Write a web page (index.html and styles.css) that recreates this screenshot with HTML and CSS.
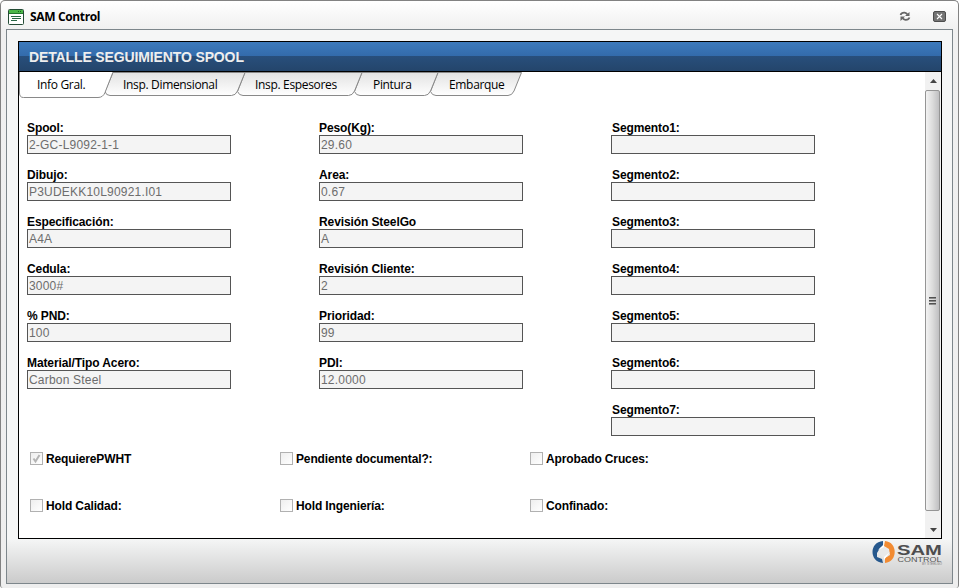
FILE: index.html
```html
<!DOCTYPE html>
<html lang="es">
<head>
<meta charset="utf-8">
<title>SAM Control</title>
<link rel="stylesheet" href="styles.css">
</head>
<body>
<div class="window">
  <header class="titlebar">
    <svg class="app-icon" width="16" height="16" viewBox="0 0 16 16">
      <rect x=".5" y=".5" width="15" height="15" rx="1" fill="#fff" stroke="#234b35"/>
      <path d="M1 1h14v3.500H1z" fill="#4bb648"/><path d="M1 4h14v1H1z" fill="#23752f"/>
      <path d="M10 2.500h1M12 2.500h1" stroke="#176020"/>
      <path d="M3 7.500h10M4 9.500h9M3 11.500h6" stroke="#286644"/>
    </svg>
    <span class="app-name">SAM Control</span>
    <svg class="reload" width="12" height="11" viewBox="0 0 12 11">
      <path d="M1.500 4q1-2.500 4-2.300 2 .3 3 1.800M10.500 6.500q-1 2.500-4 2.300-2-.3-3-1.800" fill="none" stroke="#666" stroke-width="1.700"/>
      <path d="M6 5h4.500V1zM6 5.500H1.500V10z" fill="#666"/>
    </svg>
    <svg class="close" width="13" height="11" viewBox="0 0 13 11">
      <rect x=".5" y=".5" width="12" height="10" rx="1.500" fill="#747474" stroke="#4d4d4d"/>
      <path d="M4 3l5 5M9 3L4 8" stroke="#fff" stroke-width="1.100"/>
    </svg>
  </header>
  <main class="frame">
    <section class="panel">
      <h1>DETALLE SEGUIMIENTO SPOOL</h1>
      <div class="content">
        <div class="page">
          <nav class="tabs">
            <svg class="tab-shapes" width="510" height="28" viewBox="19 72 510 28">
              <defs><linearGradient id="tab" x2="0" y2="1"><stop stop-color="#e2e2e2"/><stop offset="1" stop-color="#fff"/></linearGradient></defs>
              <g fill="url(#tab)" stroke="#898989">
                <path d="M438 72.500H521.500L514 91q-2 4.500-6 4.500H436q-4 0-5.500-4z"/>
                <path d="M362 72.500H438L430.500 91q-2 4.500-6 4.500H360q-4 0-5.500-4z"/>
                <path d="M245 72.500H362L354.500 91q-2 4.500-6 4.500H243q-4 0-5.500-4z"/>
                <path d="M113 72.500H245L237.500 91q-2 4.500-6 4.500H110q-4 0-5-4z"/>
                <path fill="#fff" d="M19.500 72V93q0 4.500 4 4.500H98q5 0 7-5L113 72"/>
              </g>
            </svg>
            <a class="tab t1"><span>Info Gral.</span></a><a class="tab t2"><span>Insp. Dimensional</span></a><a class="tab t3"><span>Insp. Espesores</span></a><a class="tab t4"><span>Pintura</span></a><a class="tab t5"><span>Embarque</span></a>
          </nav>
          <div class="fields">
            <div class="column">
              <div class="field"><label>Spool:</label><div class="value">2-GC-L9092-1-1</div></div>
              <div class="field"><label>Dibujo:</label><div class="value">P3UDEKK10L90921.I01</div></div>
              <div class="field"><label>Especificación:</label><div class="value">A4A</div></div>
              <div class="field"><label>Cedula:</label><div class="value">3000#</div></div>
              <div class="field"><label>% PND:</label><div class="value">100</div></div>
              <div class="field"><label>Material/Tipo Acero:</label><div class="value">Carbon Steel</div></div>
            </div>
            <div class="column">
              <div class="field"><label>Peso(Kg):</label><div class="value">29.60</div></div>
              <div class="field"><label>Area:</label><div class="value">0.67</div></div>
              <div class="field"><label>Revisión SteelGo</label><div class="value">A</div></div>
              <div class="field"><label>Revisión Cliente:</label><div class="value">2</div></div>
              <div class="field"><label>Prioridad:</label><div class="value">99</div></div>
              <div class="field"><label>PDI:</label><div class="value">12.0000</div></div>
            </div>
            <div class="column segments">
              <div class="field"><label>Segmento1:</label><div class="value"></div></div>
              <div class="field"><label>Segmento2:</label><div class="value"></div></div>
              <div class="field"><label>Segmento3:</label><div class="value"></div></div>
              <div class="field"><label>Segmento4:</label><div class="value"></div></div>
              <div class="field"><label>Segmento5:</label><div class="value"></div></div>
              <div class="field"><label>Segmento6:</label><div class="value"></div></div>
              <div class="field"><label>Segmento7:</label><div class="value"></div></div>
            </div>
          </div>
          <div class="checks">
            <div class="check"><i class="box"><svg width="11" height="11" viewBox="0 0 11 11"><path d="M2.500 5.500l2 3L8.500 2" fill="none" stroke="#b4b4b4" stroke-width="2"/></svg></i>RequierePWHT</div>
            <div class="check"><i class="box"></i>Pendiente documental?:</div>
            <div class="check"><i class="box"></i>Aprobado Cruces:</div>
            <div class="check"><i class="box"></i>Hold Calidad:</div>
            <div class="check"><i class="box"></i>Hold Ingeniería:</div>
            <div class="check"><i class="box"></i>Confinado:</div>
          </div>
        </div>
        <div class="scrollbar">
          <div class="arrow"><svg width="7" height="4"><path d="M0 4L3.500 0 7 4z" fill="#444"/></svg></div>
          <div class="thumb"><i></i><i></i><i></i></div>
          <div class="arrow down"><svg width="7" height="4"><path d="M0 0h7L3.500 4z" fill="#444"/></svg></div>
        </div>
      </div>
    </section>
    <footer class="brand">
      <svg width="74" height="30" viewBox="871 539 74 30">
        <path d="M883 541C869 542 869 562 883 563L882 559 877 557 877 553 880 548 883 546z" fill="#26588d"/>
        <path d="M885 541C898 542 898 562 885 563L885 558 890 555 889 549 884 546z" fill="#f28b32"/>
        <path d="M884 547l5 4-1 5-4 2-5-4 1-5z" fill="#e9e9e9"/>
        <path d="M878 550l6-6v3zM884 560v-3l6-5z" fill="#fff"/>
        <text class="logo-main" x="897" y="555" textLength="45" lengthAdjust="spacingAndGlyphs">SAM</text>
        <text class="logo-sub" x="897.500" y="561.500" textLength="44" lengthAdjust="spacingAndGlyphs">CONTROL</text>
        <text class="logo-by" x="922" y="565" textLength="20" lengthAdjust="spacingAndGlyphs">BY STEELGO</text>
      </svg>
    </footer>
  </main>
</div>
</body>
</html>
```
FILE: styles.css
```css
* { box-sizing: border-box; }
body { margin: 0; background: #fff; font: 12px "Liberation Sans", Arial, sans-serif; color: #000; overflow: hidden; }
.window { width: 959px; height: 588px; padding: 0 5px 4px; border: 1px solid #828282; border-bottom: 0; border-radius: 5px 5px 3px 3px; background: linear-gradient(#fff 0, #f0f0f0 28px, #eee 100%); }
.titlebar { height: 28px; display: flex; align-items: center; padding: 2px 7px 0 2px; }
.app-icon { margin-top: 1px; }
.app-name { font: bold 12px "Open Sans", "Noto Sans", sans-serif; margin-left: 6px; letter-spacing: -.35px; flex: 1; }
.reload { margin-right: 22px; }
.frame { height: 555px; border: 1px solid #7d868b; background: linear-gradient(#f5f6f6 0, #f5f6f6 509px, #cbcbcb 553px); padding: 11px; }
.panel { width: 924px; height: 498px; border: 1px solid #000; background: #fff; }
h1 { margin: 0; height: 30px; padding-left: 10px; border-bottom: 1px solid #000; background: linear-gradient(#3d7abc 0, #336bab 14px, #284f7c 14px, #24456b 29px); color: #eee; font-size: 14px; line-height: 31px; letter-spacing: -.13px; }
.content { display: flex; height: 466px; }
.page { width: 906px; height: 466px; }
.tabs { position: relative; display: flex; height: 28px; }
.tab-shapes { position: absolute; left: 0; top: 0; }
.tab { position: relative; font: 12px/26px "Open Sans", "Noto Sans", sans-serif; white-space: nowrap; padding-left: 18px; letter-spacing: -.33px; }
.t1 { width: 86px; } .t2 { width: 132px; } .t3 { width: 118px; } .t4 { width: 76px; } .t5 { width: 90px; }
.fields { display: flex; gap: 88px; padding: 21px 0 0 8px; height: 351px; }
.column { width: 204px; }
.field { height: 47px; }
label { display: block; height: 14px; line-height: 14px; font-weight: bold; letter-spacing: -.1px; }
.segments label { padding-left: 1px; }
.value { height: 19px; border: 1px solid #555; background: #f4f4f4; color: #6d6d6d; padding-left: 1px; font-size: 12px; line-height: 18px; letter-spacing: .2px; }
.checks { display: grid; grid-template-columns: repeat(3, 250px); grid-auto-rows: 47px; padding-left: 11px; }
.check { display: flex; height: 15px; align-items: center; font-weight: bold; letter-spacing: -.13px; }
.box { width: 13px; height: 13px; margin-right: 3px; border: 1px solid #b1b1b1; background: linear-gradient(135deg, #eee, #fff); }
.box svg { display: block; }
.scrollbar { width: 16px; height: 466px; background: #f1f1f1; }
.arrow { height: 18px; display: flex; align-items: center; justify-content: center; }
.down { padding-top: 19px; height: 27px; align-items: flex-start; padding: 17px 0 0; }
.thumb { height: 421px; width: 15px; border: 1px solid #959595; border-radius: 2px; background: linear-gradient(90deg, #f3f3f3, #dcdcdc 50%, #bfbfc1); display: flex; flex-direction: column; align-items: center; justify-content: center; gap: 1px; }
.thumb i { width: 7px; height: 2px; background: linear-gradient(#333, #aaa); }
.brand { display: flex; justify-content: flex-end; width: 927px; }
.logo-main { font: bold 15px "Liberation Sans", sans-serif; fill: #4d4d4f; }
.logo-sub { font: 7px "Liberation Sans", sans-serif; fill: #555; }
.logo-by { font: 3px "Liberation Sans", sans-serif; fill: #777; }
```
